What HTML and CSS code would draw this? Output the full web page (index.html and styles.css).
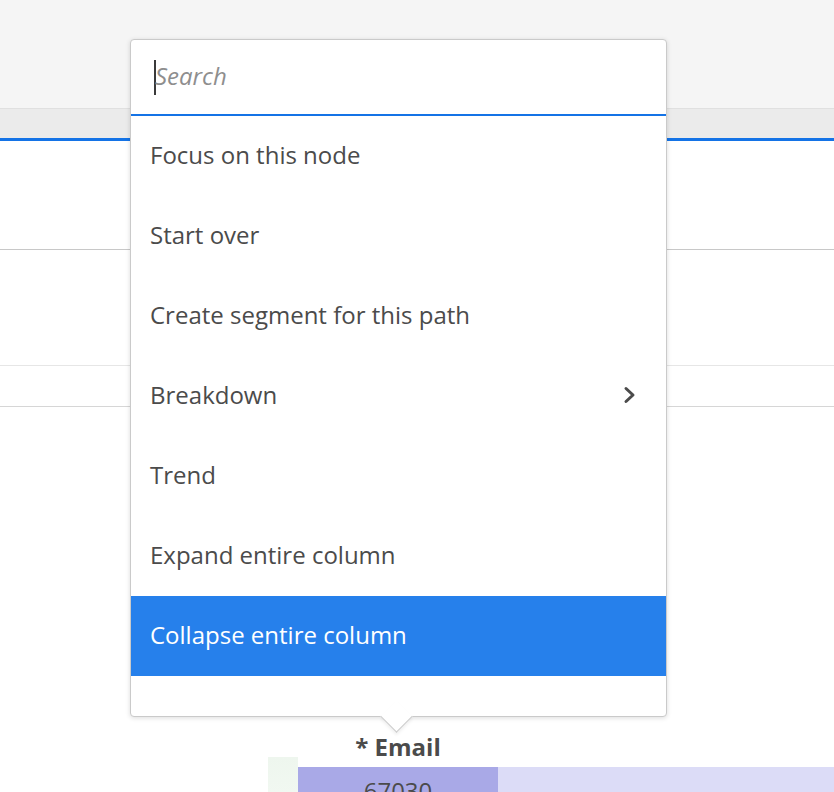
FILE: index.html
```html
<!DOCTYPE html>
<html lang="en">
<head>
<meta charset="utf-8">
<title>Flow menu</title>
<link rel="stylesheet" href="styles.css">
</head>
<body>
<div class="page">
  <div class="header"></div>
  <div class="tabbar"></div>
  <div class="section s1"></div>
  <div class="section s2"></div>
  <div class="section s3"></div>
  <div class="node-label">* Email</div>
  <div class="chart">
    <div class="chart-side"></div>
    <div class="bars">
      <div class="bar bar-main">67030</div>
      <div class="bar bar-rest"></div>
    </div>
  </div>

  <div class="menu">
    <div class="search">
      <span class="caret"></span>
      <span class="placeholder">Search</span>
    </div>
    <ul class="items">
      <li class="item">Focus on this node</li>
      <li class="item">Start over</li>
      <li class="item">Create segment for this path</li>
      <li class="item has-sub">Breakdown
        <svg class="chev" width="14" height="18" viewBox="0 0 14 18"><path d="M3 2.5 L10 9 L3 15.5" fill="none" stroke="#4b4b4b" stroke-width="3" stroke-linecap="round" stroke-linejoin="round"/></svg>
      </li>
      <li class="item">Trend</li>
      <li class="item">Expand entire column</li>
      <li class="item active">Collapse entire column</li>
    </ul>
  </div>
</div>
</body>
</html>
```

FILE: styles.css
```css
* { box-sizing: border-box; }
html, body {
  margin: 0;
  padding: 0;
  background: #ffffff;
  overflow: hidden;
}
body {
  font-family: "Open Sans", "Liberation Sans", sans-serif;
  color: #4b4b4b;
}
.page {
  position: relative;
  width: 834px;
  height: 792px;
  overflow: hidden;
}
.header {
  height: 108px;
  background: #f5f5f5;
}
.tabbar {
  height: 33px;
  background: #ebebeb;
  border-top: 1px solid #e0e0e0;
  border-bottom: 3px solid #1473e6;
}
.section { border-bottom: 1px solid #dcdcdc; }
.s1 { height: 109px; border-bottom-color: #c8c8c8; }
.s2 { height: 116px; border-bottom-color: #e6e6e6; }
.s3 { height: 41px; border-bottom-color: #d6d6d6; }

.node-label {
  margin-top: 329px;
  margin-left: 298px;
  width: 200px;
  text-align: center;
  font-weight: 700;
  font-size: 24px;
  line-height: 22px;
  height: 22px;
  color: #4b4b4b;
}
.chart {
  display: flex;
  margin-top: -1px;
  padding-left: 268px;
  height: 60px;
}
.chart-side {
  width: 30px;
  background: linear-gradient(#eef6ee, #f3f9f3);
}
.bars {
  flex: 1;
  display: flex;
  margin-top: 10px;
}
.bar { height: 50px; }
.bar-main {
  width: 200px;
  background: #a9a9e7;
  text-align: center;
  font-size: 24px;
  line-height: 24px;
  padding-top: 12px;
  color: #4b4b4b;
}
.bar-rest {
  flex: 1;
  background: #dcdcf7;
}

.menu {
  position: absolute;
  left: 130px;
  top: 39px;
  width: 537px;
  background: #ffffff;
  border: 1px solid #cacaca;
  border-radius: 4px;
  box-shadow: 0 1px 5px rgba(0, 0, 0, 0.14);
  padding-bottom: 40px;
}
.menu::after {
  content: "";
  position: absolute;
  left: 254px;
  bottom: -12px;
  width: 22px;
  height: 22px;
  background: #ffffff;
  border-right: 1px solid #cacaca;
  border-bottom: 1px solid #cacaca;
  transform: rotate(45deg);
  box-shadow: 2px 2px 3px rgba(0, 0, 0, 0.06);
}
.search {
  height: 76px;
  border-bottom: 2px solid #1473e6;
  display: flex;
  align-items: center;
  padding-left: 23px;
  padding-bottom: 2px;
  border-radius: 4px 4px 0 0;
}
.caret {
  width: 2px;
  height: 35px;
  background: #3a3a3a;
  margin-right: -1px;
  margin-top: 2px;
}
.placeholder {
  font-style: italic;
  font-size: 24px;
  color: #8e8e8e;
  margin-bottom: 2px;
}
.items {
  list-style: none;
  margin: 0;
  padding: 0;
}
.item {
  height: 80px;
  display: flex;
  align-items: center;
  justify-content: space-between;
  padding: 0 29px 4px 19px;
  font-size: 24px;
  color: #4b4b4b;
}
.item.active {
  background: #2680eb;
  color: #ffffff;
}
.chev { display: block; margin-top: 2px; }
```
